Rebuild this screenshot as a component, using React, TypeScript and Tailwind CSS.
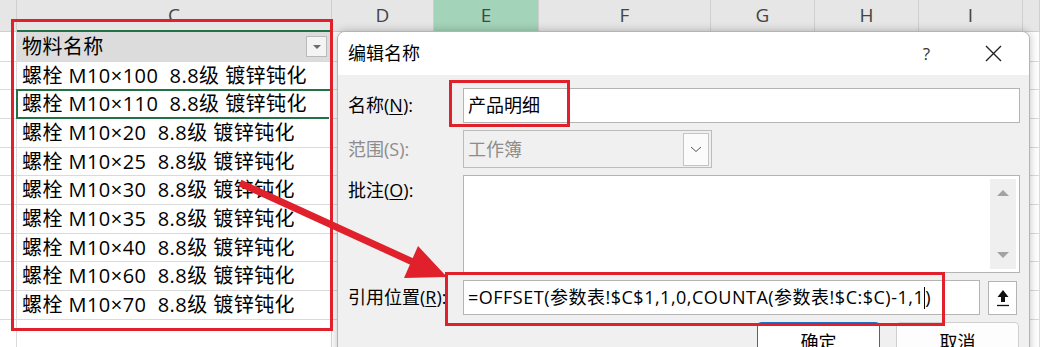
import React from "react";

const FONT = { fontFamily: '"Open Sans", "Noto Sans CJK SC", sans-serif' };

const colW = [17, 315, 102, 105, 172, 104, 104, 104, 17];
const colL = ["", "C", "D", "E", "F", "G", "H", "I", ""];
const rowH = [30, 28, 29, 29, 28, 29, 29, 28, 29, 29, 29];
const items = [
  "物料名称",
  "螺栓 M10×100  8.8级 镀锌钝化",
  "螺栓 M10×110  8.8级 镀锌钝化",
  "螺栓 M10×20  8.8级 镀锌钝化",
  "螺栓 M10×25  8.8级 镀锌钝化",
  "螺栓 M10×30  8.8级 镀锌钝化",
  "螺栓 M10×35  8.8级 镀锌钝化",
  "螺栓 M10×40  8.8级 镀锌钝化",
  "螺栓 M10×60  8.8级 镀锌钝化",
  "螺栓 M10×70  8.8级 镀锌钝化",
  "",
];

function Sheet() {
  return (
    <div className="flex flex-col">
      <div className="flex h-[32px] bg-[#e6e6e6]">
        {colW.map((w, i) => (
          <div
            key={i}
            style={{ width: w }}
            className={
              "flex shrink-0 items-center justify-center border-r border-[#cfcfcf] text-[19px] text-[#444] " +
              (i === 3 ? "bg-[#a3d3b8] " : "") +
              (i === 1 ? "border-b-2 border-b-[#217346] " : "border-b border-b-[#cfcfcf] ")
            }
          >
            <span className="leading-none">{colL[i]}</span>
          </div>
        ))}
      </div>
      {rowH.map((h, r) => (
        <div key={r} className="flex" style={{ height: h }}>
          {colW.map((w, i) => (
            <div
              key={i}
              style={{ width: w }}
              className={
                "relative flex shrink-0 items-center border-b border-r border-[#dadada] " +
                (i === 1 && r === 0 ? "bg-[#dcdcdc] " : "bg-white ")
              }
            >
              {i === 1 && (
                <>
                  <span className="whitespace-pre pl-[5px] text-[20px] leading-none tracking-[0.45px] text-black">{items[r]}</span>
                  {r === 0 && (
                    <div className="absolute right-[4px] top-[4px] flex h-[21px] w-[21px] items-center justify-center border border-[#b9b9b9] bg-[#f4f4f4]">
                      <div className="h-0 w-0 border-x-[4px] border-t-[4px] border-x-transparent border-t-[#6b6b6b]" />
                    </div>
                  )}
                  {r === 2 && (
                    <>
                      <div className="pointer-events-none absolute inset-[-1px] border-2 border-[#217346]" />
                      <div className="absolute bottom-[-4px] right-[-4px] h-[6px] w-[6px] border border-white bg-[#217346]" />
                    </>
                  )}
                </>
              )}
            </div>
          ))}
        </div>
      ))}
    </div>
  );
}

function Dialog() {
  return (
    <div className="absolute left-[337px] top-[31px] h-[340px] w-[693px] overflow-hidden rounded-t-[8px] border border-[#b4b4b4] bg-[#f0f0f0] shadow-[0_0_8px_rgba(0,0,0,0.25)]">
      <div className="flex h-[43px] items-center justify-between bg-white pl-[10px] pr-[27px]">
        <span className="text-[18px] text-black">编辑名称</span>
        <div className="flex items-center gap-[55px]">
          <span className="text-[17px] text-[#333]">?</span>
          <svg width="17" height="17" viewBox="0 0 17 17">
            <path d="M1 1 L16 16 M16 1 L1 16" stroke="#222" strokeWidth="1.4" fill="none" />
          </svg>
        </div>
      </div>
      <div className="flex flex-col pl-[10px] pr-[9px] pt-[13px]">
        <div className="flex h-[35px] items-center">
          <span className="w-[115px] text-[18px] text-black">
            名称(<span className="underline underline-offset-2">N</span>):
          </span>
          <div className="flex h-full flex-1 items-center border border-[#b4b4b4] bg-white pl-[4px]">
            <span className="text-[18px] text-black">产品明细</span>
          </div>
        </div>
        <div className="mt-[7px] flex h-[38px] items-center">
          <span className="w-[115px] text-[18px] text-[#8c8c8c]">范围(S):</span>
          <div className="flex h-full w-[249px] items-center justify-between border border-[#bcbcbc] bg-[#f0f0f0] pl-[4px] pr-[2px]">
            <span className="text-[18px] text-[#8c8c8c]">工作簿</span>
            <div className="flex h-[33px] w-[26px] items-center justify-center border border-[#c4c4c4] bg-[#fbfbfb]">
              <svg width="12" height="8" viewBox="0 0 12 8">
                <path d="M1 2 L6 6.5 L11 2" stroke="#555" strokeWidth="1" fill="none" />
              </svg>
            </div>
          </div>
        </div>
        <div className="mt-[7px] flex h-[98px] items-start">
          <span className="mt-[2px] w-[115px] text-[18px] text-black">
            批注(<span className="underline underline-offset-2">O</span>):
          </span>
          <div className="flex h-full flex-1 justify-end border border-[#b4b4b4] bg-white p-[3px]">
            <div className="flex w-[26px] flex-col items-center justify-between bg-[#efefef] py-[11px]">
              <div className="h-0 w-0 border-x-[6px] border-b-[6px] border-x-transparent border-b-[#a3a3a3]" />
              <div className="h-0 w-0 border-x-[6px] border-t-[6px] border-x-transparent border-t-[#a3a3a3]" />
            </div>
          </div>
        </div>
        <div className="mt-[7px] flex h-[35px] items-center">
          <span className="w-[115px] whitespace-nowrap text-[18px] text-black">
            引用位置(<span className="underline underline-offset-2">R</span>):
          </span>
          <div className="flex h-full w-[517px] items-center overflow-hidden border border-[#b4b4b4] bg-white pl-[4px]">
            <span className="whitespace-pre text-[18px] tracking-[0.5px] text-black">=OFFSET(参数表!$C$1,1,0,COUNTA(参数表!$C:$C)-1,1</span>
            <span className="h-[22px] w-[1px] shrink-0 bg-black" />
            <span className="text-[18px] text-black">)</span>
          </div>
          <div className="ml-[8px] flex h-[34px] w-[29px] items-center justify-center border border-[#b4b4b4] bg-white">
            <svg width="14" height="18" viewBox="0 0 14 18">
              <path d="M7 1 L12.5 8 L9 8 L9 13 L5 13 L5 8 L1.5 8 Z" fill="#111" />
              <path d="M1 16.5 L13 16.5" stroke="#111" strokeWidth="1.3" />
            </svg>
          </div>
        </div>
        <div className="mt-[7px] flex h-[40px] justify-end gap-[16px] pr-[1px]">
          <div className="flex h-full w-[123px] items-center justify-center rounded-[4px] border border-[#1f6fc4] bg-white">
            <span className="text-[18px] text-black">确定</span>
          </div>
          <div className="flex h-full w-[123px] items-center justify-center rounded-[4px] border border-[#d0d0d0] bg-[#fdfdfd]">
            <span className="text-[18px] text-black">取消</span>
          </div>
        </div>
      </div>
    </div>
  );
}

export default function App() {
  return (
    <div className="relative h-[347px] w-[1040px] overflow-hidden bg-white" style={FONT}>
      <Sheet />
      <Dialog />
      {/* annotations */}
      <div className="pointer-events-none absolute left-[11px] top-[19px] h-[312px] w-[322px] border-[3px] border-[#e0202a]" />
      <div className="pointer-events-none absolute left-[449px] top-[80px] h-[47px] w-[121px] border-[3px] border-[#e0202a]" />
      <div className="pointer-events-none absolute left-[445px] top-[272px] h-[54px] w-[500px] border-[3px] border-[#e0202a]" />
      <svg className="pointer-events-none absolute left-0 top-0" width="1040" height="347">
        <line x1="240" y1="183" x2="415" y2="263" stroke="#e0202a" strokeWidth="7" />
        <polygon points="447,277 418,246 404,278" fill="#e0202a" />
      </svg>
    </div>
  );
}
